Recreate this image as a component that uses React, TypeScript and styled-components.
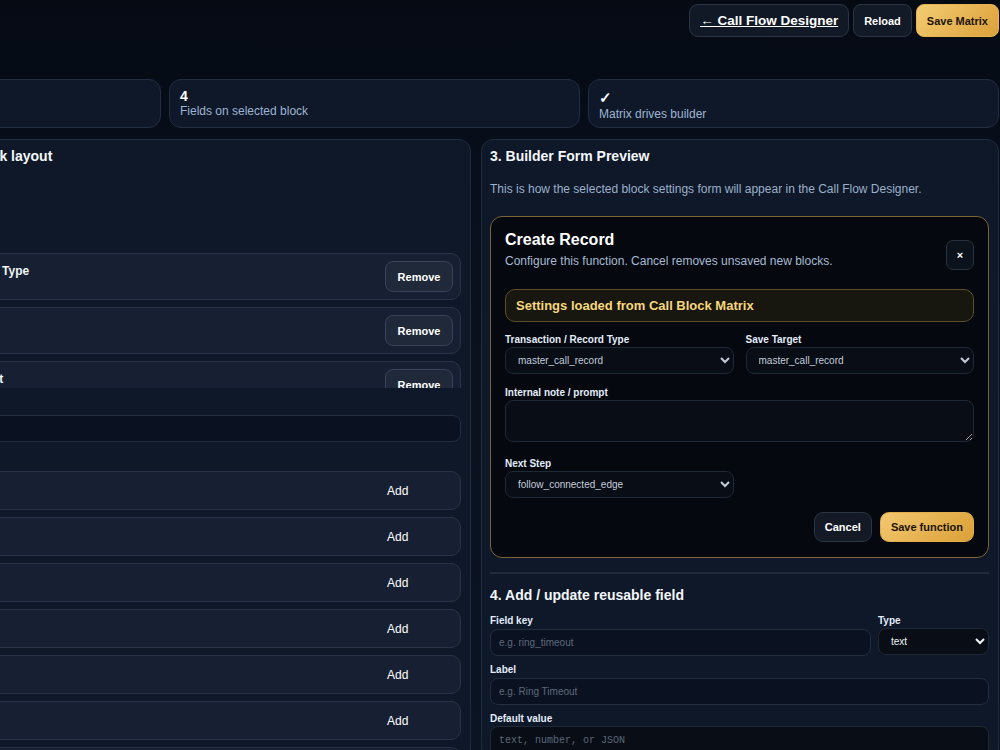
import styled, { createGlobalStyle } from "styled-components";

const GlobalStyle = createGlobalStyle`
  * { box-sizing: border-box; }
  html, body { margin: 0; }
  body {
    background: linear-gradient(180deg, #050a13 0%, #09111e 30%, #0b1423 100%);
    font-family: "Liberation Sans", Arial, sans-serif;
    color: #e6edf7;
    color-scheme: dark;
    overflow: hidden;
    min-height: 100vh;
  }
`;

const Page = styled.div`
  width: 1249px;
  margin-left: -250px;
  padding-top: 4px;
`;

const Header = styled.header`
  display: flex;
  justify-content: space-between;
  align-items: flex-start;
  height: 71px;
`;

const TitleBlock = styled.div`
  display: flex;
  flex-direction: column;
  gap: 4px;
`;

const PageTitle = styled.h1`
  margin: 0;
  font-size: 20px;
  color: #f8fafc;
`;

const PageSub = styled.p`
  margin: 0;
  font-size: 12px;
  color: #94a3b8;
`;

const Actions = styled.div`
  display: flex;
  gap: 4px;
`;

const HeaderButton = styled.button<{ $variant?: "ghost" | "gold" }>`
  height: 33px;
  padding: 0 10px;
  border-radius: 8px;
  font-family: inherit;
  font-size: 11px;
  font-weight: 700;
  cursor: pointer;
  border: 1px solid ${(p) => (p.$variant === "gold" ? "#e7b451" : "#2b3546")};
  background: ${(p) =>
    p.$variant === "gold"
      ? "linear-gradient(135deg, #f3cc73 0%, #dca03a 100%)"
      : "#121a27"};
  color: ${(p) => (p.$variant === "gold" ? "#1b1306" : "#ffffff")};
`;

const BackLink = styled.a`
  display: flex;
  align-items: center;
  height: 33px;
  padding: 0 10px;
  border-radius: 9px;
  border: 1px solid #2b3546;
  background: #111927;
  color: #ffffff;
  font-size: 13.5px;
  font-weight: 700;
  text-decoration: underline;
`;

const Stats = styled.section`
  display: grid;
  grid-template-columns: repeat(3, 1fr);
  gap: 8px;
  margin-top: 4px;
`;

const StatCard = styled.div`
  height: 49px;
  padding: 8px 10px 0;
  border-radius: 12px;
  border: 1px solid #222e42;
  background: #0e1829;
`;

const StatValue = styled.div<{ $glyph?: boolean }>`
  font-size: ${(p) => (p.$glyph ? "15px" : "14px")};
  font-weight: 700;
  line-height: ${(p) => (p.$glyph ? "19px" : "16px")};
  color: #ffffff;
`;

const StatLabel = styled.div`
  font-size: 12px;
  line-height: 14px;
  color: #9fb4d2;
`;

const Main = styled.main`
  display: grid;
  grid-template-columns: 1fr 518px;
  gap: 10px;
  margin-top: 11px;
  align-items: start;
`;

const Panel = styled.section`
  display: flex;
  flex-direction: column;
  padding: 8px 9px 20px 8px;
  border-radius: 12px;
  border: 1px solid #1f2b3e;
  background: #0e1828;
  min-height: 700px;
`;

const PanelTitle = styled.h2`
  margin: 0;
  font-size: 14px;
  line-height: 17px;
  font-weight: 700;
  color: #f4f7fb;
`;

const PanelDesc = styled.p`
  margin: 17px 0 0;
  font-size: 12px;
  line-height: 14px;
  color: #9cb0cb;
`;

const BlockSelect = styled.select`
  width: 200px;
  height: 27px;
  margin-top: 10px;
  padding: 0 8px;
  border-radius: 8px;
  border: 1px solid #222d3f;
  background: #0a1221;
  color: #cbd5e1;
  font-family: inherit;
  font-size: 10px;
`;

const FieldList = styled.div`
  display: flex;
  flex-direction: column;
  gap: 7px;
  margin-top: 20px;
  max-height: 135px;
  overflow: hidden;
`;

const FieldRow = styled.div<{ $compact?: boolean }>`
  display: grid;
  grid-template-columns: 100px 1fr 68px;
  gap: 10px;
  align-items: center;
  flex: none;
  height: ${(p) => (p.$compact ? "39px" : "47px")};
  padding: 0 7px 0 10px;
  border-radius: 10px;
  border: 1px solid #283347;
  background: #172032;
`;

const FieldKey = styled.code`
  font-family: "Liberation Mono", monospace;
  font-size: 10px;
  color: #8aa0bd;
`;

const FieldInfo = styled.div`
  display: flex;
  flex-direction: column;
`;

const FieldTitle = styled.div`
  font-size: 12px;
  line-height: 14px;
  font-weight: 700;
  color: #f1f5f9;
  white-space: nowrap;
`;

const FieldMeta = styled.div`
  font-size: 10px;
  line-height: 12px;
  color: #7c8ba1;
`;

const RemoveButton = styled.button`
  height: 31px;
  border-radius: 8px;
  border: 1px solid #38435a;
  background: #202939;
  color: #ffffff;
  font-family: inherit;
  font-size: 11px;
  font-weight: 700;
  cursor: pointer;
`;

const AddButton = styled.button`
  padding: 0 2px;
  border: none;
  background: transparent;
  color: #ffffff;
  font-family: inherit;
  font-size: 12px;
  text-align: left;
  cursor: pointer;
`;

const SmallLabel = styled.label<{ $gap?: number }>`
  display: block;
  margin-top: ${(p) => p.$gap ?? 0}px;
  font-size: 10px;
  line-height: 12px;
  font-weight: 700;
  color: #e3ecfa;
`;

const TextInput = styled.input<{ $gap?: number }>`
  width: 100%;
  height: 27px;
  margin-top: ${(p) => p.$gap ?? 1}px;
  padding: 0 8px;
  border-radius: 8px;
  border: 1px solid #222d3e;
  background: #0a1221;
  color: #e2e8f0;
  font-family: inherit;
  font-size: 10px;
  outline: none;
  &::placeholder { color: #5d6879; }
`;

const Library = styled.div`
  display: flex;
  flex-direction: column;
  gap: 7px;
  margin-top: 29px;
`;

const Preview = styled.div`
  margin-top: 20px;
  padding: 13px 14px 15px;
  border-radius: 12px;
  border: 1px solid #7b6436;
  background: #05090f;
`;

const PreviewHead = styled.div`
  display: flex;
  justify-content: space-between;
  align-items: flex-start;
`;

const PreviewTitle = styled.h3`
  margin: 0;
  font-size: 16px;
  line-height: 19px;
  color: #ffffff;
`;

const PreviewSub = styled.p`
  margin: 5px 0 0;
  font-size: 12px;
  line-height: 14px;
  color: #a7b9d2;
`;

const CloseButton = styled.button`
  width: 28px;
  height: 30px;
  margin-top: 10px;
  border-radius: 7px;
  border: 1px solid #29323f;
  background: #0c121c;
  color: #ffffff;
  font-family: inherit;
  font-size: 11px;
  font-weight: 700;
  padding: 0;
`;

const Banner = styled.div`
  margin-top: 19px;
  padding: 8px 10px;
  border-radius: 10px;
  border: 1px solid #5e4e2b;
  background: #17160f;
  color: #f6d77c;
  font-size: 13px;
  line-height: 15px;
  font-weight: 700;
`;

const TwoCols = styled.div<{ $gap?: number }>`
  display: grid;
  grid-template-columns: 1fr 1fr;
  column-gap: 12px;
  margin-top: ${(p) => p.$gap ?? 0}px;
`;

const Field = styled.div<{ $gap?: number }>`
  display: flex;
  flex-direction: column;
  gap: 1px;
  margin-top: ${(p) => p.$gap ?? 0}px;
`;

const Select = styled.select<{ $bright?: boolean }>`
  width: 100%;
  height: 27px;
  padding: 0 8px;
  border-radius: 8px;
  border: 1px solid #1f2836;
  background: #080d16;
  color: ${(p) => (p.$bright ? "#f1f5f9" : "#c3ccd8")};
  font-family: inherit;
  font-size: 10px;
`;

const TextArea = styled.textarea<{ $height: number; $mono?: boolean }>`
  width: 100%;
  height: ${(p) => p.$height}px;
  display: block;
  padding: 8px;
  border-radius: 8px;
  border: 1px solid #1f2836;
  background: #080d16;
  color: #e2e8f0;
  font-family: ${(p) => (p.$mono ? '"Liberation Mono", monospace' : "inherit")};
  font-size: 10px;
  &::placeholder { color: #5d6879; }
`;

const FormActions = styled.div`
  display: flex;
  justify-content: flex-end;
  gap: 8px;
  margin-top: 14px;
`;

const FormButton = styled.button<{ $primary?: boolean }>`
  height: 30px;
  padding: 0 10px;
  border-radius: 9px;
  border: 1px solid ${(p) => (p.$primary ? "#e2ad4c" : "#2b3442")};
  background: ${(p) =>
    p.$primary ? "linear-gradient(135deg, #f2c86f 0%, #dba037 100%)" : "#131a26"};
  color: ${(p) => (p.$primary ? "#1b1306" : "#ffffff")};
  font-family: inherit;
  font-size: 11px;
  font-weight: 700;
`;

const Divider = styled.hr`
  margin: 14px 0 0;
  height: 2px;
  border: none;
  background: #1f2a3a;
`;

const SectionTitle = styled(PanelTitle)`
  margin-top: 13px;
`;

const KeyTypeRow = styled.div`
  display: grid;
  grid-template-columns: 1fr 111px;
  gap: 7px;
  margin-top: 11px;
`;

const blockFields = [
  { key: "record_type", title: "Transaction / Record Type", meta: "select" },
  { key: "save_target", title: "Save Target", meta: "select" },
  { key: "internal_note", title: "Internal note / prompt", meta: "textarea" },
  { key: "next_step", title: "Next Step", meta: "select" },
];

const libraryFields = [
  { key: "ring_timeout", title: "Ring Timeout" },
  { key: "queue_name", title: "Queue Name" },
  { key: "caller_id", title: "Caller ID" },
  { key: "voicemail_box", title: "Voicemail Box" },
  { key: "transfer_to", title: "Transfer To" },
  { key: "priority", title: "Priority" },
  { key: "language", title: "Language" },
  { key: "retry_count", title: "Retry Count" },
];

export default function App() {
  return (
    <>
      <GlobalStyle />
      <Page>
        <Header>
          <TitleBlock>
            <PageTitle>Call Block Matrix</PageTitle>
            <PageSub>Configure block settings.</PageSub>
          </TitleBlock>
          <Actions>
            <BackLink href="#">← Call Flow Designer</BackLink>
            <HeaderButton>Reload</HeaderButton>
            <HeaderButton $variant="gold">Save Matrix</HeaderButton>
          </Actions>
        </Header>

        <Stats>
          <StatCard>
            <StatValue>12</StatValue>
            <StatLabel>Call blocks</StatLabel>
          </StatCard>
          <StatCard>
            <StatValue>4</StatValue>
            <StatLabel>Fields on selected block</StatLabel>
          </StatCard>
          <StatCard>
            <StatValue $glyph>✓</StatValue>
            <StatLabel>Matrix drives builder</StatLabel>
          </StatCard>
        </Stats>

        <Main>
          <Panel>
            <PanelTitle>2. Field order on a selected call block layout</PanelTitle>
            <PanelDesc>Drag to reorder.</PanelDesc>
            <BlockSelect defaultValue="create_record">
              <option value="create_record">Create Record</option>
            </BlockSelect>
            <FieldList>
              {blockFields.map((f) => (
                <FieldRow key={f.key}>
                  <FieldKey>{f.key}</FieldKey>
                  <FieldInfo>
                    <FieldTitle>{f.title}</FieldTitle>
                    <FieldMeta>{f.meta}</FieldMeta>
                  </FieldInfo>
                  <RemoveButton>Remove</RemoveButton>
                </FieldRow>
              ))}
            </FieldList>
            <SmallLabel $gap={10}>Field library</SmallLabel>
            <TextInput $gap={5} placeholder="Search..." />
            <Library>
              {libraryFields.map((f) => (
                <FieldRow key={f.key} $compact>
                  <FieldKey>{f.key}</FieldKey>
                  <FieldTitle>{f.title}</FieldTitle>
                  <AddButton>Add</AddButton>
                </FieldRow>
              ))}
            </Library>
          </Panel>

          <Panel>
            <PanelTitle>3. Builder Form Preview</PanelTitle>
            <PanelDesc>
              This is how the selected block settings form will appear in the Call Flow Designer.
            </PanelDesc>
            <Preview>
              <PreviewHead>
                <div>
                  <PreviewTitle>Create Record</PreviewTitle>
                  <PreviewSub>Configure this function. Cancel removes unsaved new blocks.</PreviewSub>
                </div>
                <CloseButton>×</CloseButton>
              </PreviewHead>
              <Banner>Settings loaded from Call Block Matrix</Banner>
              <TwoCols $gap={12}>
                <Field>
                  <SmallLabel>Transaction / Record Type</SmallLabel>
                  <Select defaultValue="master_call_record">
                    <option>master_call_record</option>
                  </Select>
                </Field>
                <Field>
                  <SmallLabel>Save Target</SmallLabel>
                  <Select defaultValue="master_call_record">
                    <option>master_call_record</option>
                  </Select>
                </Field>
              </TwoCols>
              <Field $gap={13}>
                <SmallLabel>Internal note / prompt</SmallLabel>
                <TextArea $height={42} />
              </Field>
              <TwoCols $gap={16}>
                <Field>
                  <SmallLabel>Next Step</SmallLabel>
                  <Select defaultValue="follow_connected_edge">
                    <option>follow_connected_edge</option>
                  </Select>
                </Field>
              </TwoCols>
              <FormActions>
                <FormButton>Cancel</FormButton>
                <FormButton $primary>Save function</FormButton>
              </FormActions>
            </Preview>

            <Divider />
            <SectionTitle>4. Add / update reusable field</SectionTitle>
            <KeyTypeRow>
              <Field>
                <SmallLabel>Field key</SmallLabel>
                <TextInput placeholder="e.g. ring_timeout" />
              </Field>
              <Field>
                <SmallLabel>Type</SmallLabel>
                <Select $bright defaultValue="text">
                  <option>text</option>
                </Select>
              </Field>
            </KeyTypeRow>
            <Field $gap={8}>
              <SmallLabel>Label</SmallLabel>
              <TextInput placeholder="e.g. Ring Timeout" />
            </Field>
            <Field $gap={8}>
              <SmallLabel>Default value</SmallLabel>
              <TextArea $height={50} $mono placeholder="text, number, or JSON" />
            </Field>
          </Panel>
        </Main>
      </Page>
    </>
  );
}
